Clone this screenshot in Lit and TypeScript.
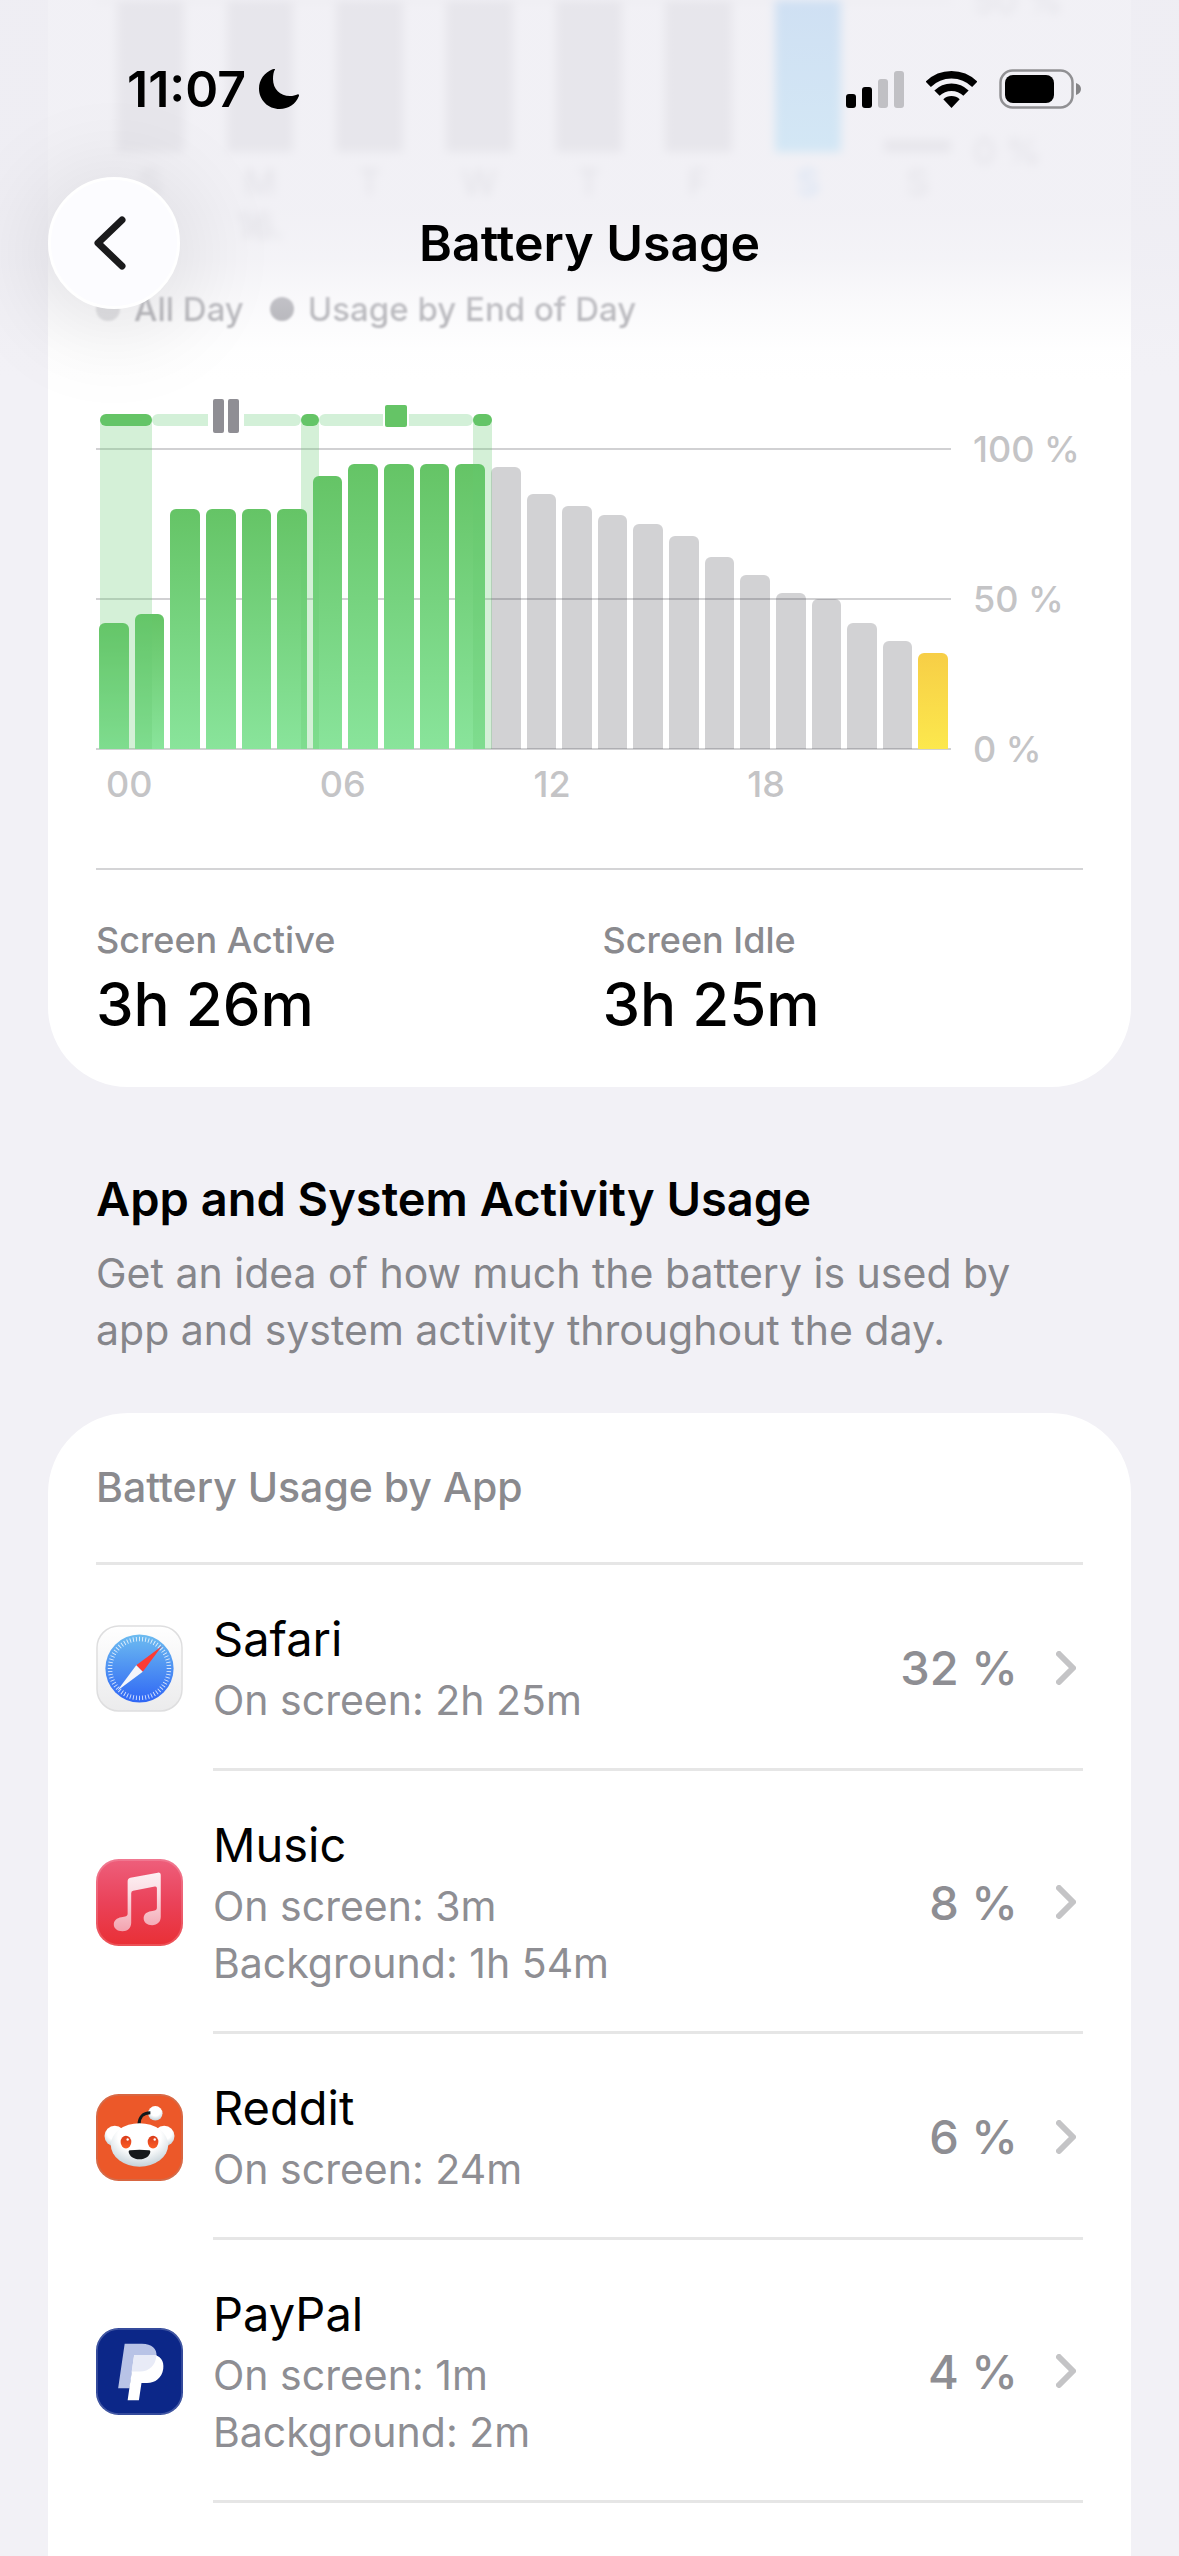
import { LitElement, css, html, svg } from 'lit'
import { customElement, property } from 'lit/decorators.js'
import { classMap } from 'lit/directives/class-map.js'

interface Usage {
   id: string
   name: string
   details: string[]
   percent: number
}

interface Segment {
   kind: 'idle' | 'charging' | 'paused' | 'done'
   start: number
   end: number
}

// battery level per hour, in percent
const levels = [
   42, 45, 80, 80, 80, 80, 91, 95, 95, 95, 95, 94,
   85, 81, 78, 75, 71, 64, 58, 52, 50, 42, 36, 32,
]

// hours during which the phone was plugged in
const segments: Segment[] = [
   { kind: 'idle', start: 0, end: 0.11 },
   { kind: 'charging', start: 0.11, end: 1.56 },
   { kind: 'paused', start: 1.56, end: 5.75 },
   { kind: 'charging', start: 5.75, end: 6.26 },
   { kind: 'done', start: 6.26, end: 10.59 },
   { kind: 'charging', start: 10.59, end: 11.11 },
]

const week = [
   { day: 'S', level: 100 },
   { day: 'M', level: 100, date: '16.' },
   { day: 'T', level: 100 },
   { day: 'W', level: 100 },
   { day: 'T', level: 100 },
   { day: 'F', level: 100 },
   { day: 'S', level: 100, selected: true },
   { day: 'S', level: 4 },
]

const apps: Usage[] = [
   { id: 'safari', name: 'Safari', details: ['On screen: 2h 25m'], percent: 32 },
   { id: 'music', name: 'Music', details: ['On screen: 3m', 'Background: 1h 54m'], percent: 8 },
   { id: 'reddit', name: 'Reddit', details: ['On screen: 24m'], percent: 6 },
   { id: 'paypal', name: 'PayPal', details: ['On screen: 1m', 'Background: 2m'], percent: 4 },
]

const logos = {
   safari: svg`
      <defs>
         <linearGradient id="case" x1="0" y1="0" x2="0" y2="1">
            <stop offset="0" stop-color="#fff" /><stop offset="1" stop-color="#ebebec" />
         </linearGradient>
         <linearGradient id="dial" x1="0" y1="0" x2="0" y2="1">
            <stop offset="0" stop-color="#6dbcf0" /><stop offset="1" stop-color="#2f66f5" />
         </linearGradient>
      </defs>
      <rect x="1" y="1" width="86" height="86" rx="22" fill="url(#case)" stroke="#dededf" stroke-width="1.5" />
      <circle cx="44" cy="44" r="34.5" fill="url(#dial)" />
      <circle cx="44" cy="44" r="29.8" fill="none" stroke="#fff" stroke-opacity=".8" stroke-width="4.6"
         pathLength="60" stroke-dasharray=".3 .7" stroke-dashoffset=".15" />
      <path d="M66.5 21.5 47.3 47.3 40.7 40.7Z" fill="#fb3b35" />
      <path d="M21.5 66.5 40.7 40.7 47.3 47.3Z" fill="#f4f6fb" />
   `,
   music: svg`
      <defs>
         <linearGradient id="red" x1="0" y1="0" x2="0" y2="1">
            <stop offset="0" stop-color="#ee5f7c" /><stop offset=".5" stop-color="#ea4259" />
            <stop offset="1" stop-color="#e92f35" />
         </linearGradient>
         <linearGradient id="note" x1="0" y1="0" x2="0" y2="1">
            <stop offset="0" stop-color="#fdf0f3" /><stop offset=".35" stop-color="#fadde3" />
            <stop offset="1" stop-color="#f3a3af" />
         </linearGradient>
      </defs>
      <rect width="88" height="88" rx="23" fill="url(#red)" />
      <rect x="1" y="1" width="86" height="86" rx="22" fill="none" stroke="#fff" stroke-opacity=".16" stroke-width="2" />
      <path fill="url(#note)" d="M32 22.5Q32 19.6 34.8 19L62.5 13.8Q65.5 13.4 65.5 16.4V58.5C65.5 63.6 62 67 56.8 67
         C51.6 67 48.2 64 48.2 60C48.2 56 51 53.6 55.6 52.8C59.6 52.2 61.6 51.8 61.6 49V29.5Q61.6 27.4 59.5 27.8
         L37.6 32.2Q35.6 32.6 35.6 34.6V64.4C35.6 69.6 32 73 26.8 73C21.4 73 18 70.2 18 66.2C18 62 21 59.6 25.6 58.8
         C29.8 58.2 32 57.8 32 55Z" />
   `,
   reddit: svg`
      <defs>
         <radialGradient id="face" cx=".5" cy=".3" r=".75">
            <stop offset=".5" stop-color="#fff" /><stop offset="1" stop-color="#bccbd3" />
         </radialGradient>
         <linearGradient id="eye" x1="0" y1="0" x2="0" y2="1">
            <stop offset="0" stop-color="#d93c1b" /><stop offset="1" stop-color="#fb5d25" />
         </linearGradient>
      </defs>
      <rect width="88" height="88" rx="23" fill="#ec5829" />
      <rect x="1" y="1" width="86" height="86" rx="22" fill="none" stroke="#999" stroke-opacity=".3" stroke-width="1.5" />
      <circle cx="60" cy="19.5" r="7.3" fill="url(#face)" />
      <path d="M43.5 31C43.5 23.5 47.5 19 55 19" fill="none" stroke="#11191c" stroke-width="3" />
      <circle cx="19" cy="42.5" r="10.4" fill="url(#face)" />
      <circle cx="69" cy="42.5" r="10.4" fill="url(#face)" />
      <ellipse cx="44" cy="51.5" rx="29" ry="22" fill="url(#face)" />
      <ellipse cx="30.3" cy="48.6" rx="5.4" ry="6.4" fill="url(#eye)" />
      <ellipse cx="57.7" cy="48.6" rx="5.4" ry="6.4" fill="url(#eye)" />
      <circle cx="32" cy="46" r="1.2" fill="#fff" /><circle cx="59.4" cy="46" r="1.2" fill="#fff" />
      <path d="M33 58.4Q33 57 34.6 57Q44 56 53.4 57Q55 57 55 58.4C54.2 63 50 66 44 66C38 66 33.8 63 33 58.4Z" fill="#15191b" />
   `,
   paypal: svg`
      <rect width="88" height="88" rx="23" fill="#0c2788" />
      <rect x="1" y="1" width="86" height="86" rx="22" fill="none" stroke="#fff" stroke-opacity=".22" stroke-width="1.5" />
      <path d="M29 16H46.5C56.5 16 61.8 21 61.2 28.5C60 38.5 53.5 44 44.5 44H36.5L34 61H22.4Z" fill="#b8c3e6" />
      <path d="M38.6 27.4H57C65 27.4 69.2 33.4 68 41.4C66.6 50.4 60 55.6 51.6 55.6H46L43.4 73H32Z" fill="#fff" />
      <path d="M38.6 27.4H61.2C60.4 38.4 53.5 44 44.5 44H36.1Z" fill="#e8ebf7" />
   `,
}

const chargeIcons = {
   paused: svg`
      <rect x="5" y="0" width="11" height="34" rx="2" fill="#8f8e94" />
      <rect x="20" y="0" width="11" height="34" rx="2" fill="#8f8e94" />
   `,
   done: svg`<rect x="2" y="6" width="22" height="22" rx="2" fill="#65c466" />`,
}

/**
 * Clock and connection symbols at the top of the screen
 */
@customElement('status-bar')
export class StatusBar extends LitElement {

   render() {
      return html`
         <div class="left">
            <span class="time">11:07</span>
            <svg width="40" height="40" viewBox="0 0 40 40">
               <path d="M15.8.8C14.6 3 14 6.200 14 10C14 20 21 27 31 27C34 27 36.500 26.300 38.400 25.500
                  C39.900 25 40.300 26 39.800 27.300C36.800 35 29.500 40 20.700 40C9 40 0 31 0 19.500
                  C0 11 5.500 3.500 13.500.3C15.200-.3 16.600-.4 15.800.8Z" />
            </svg>
         </div>
         <div class="right">
            <svg width="58" height="38" viewBox="0 0 58 38">
               <rect x="0" y="24" width="10" height="14" rx="3" />
               <rect x="16" y="17" width="10" height="21" rx="3" />
               <rect x="32" y="9" width="10" height="29" rx="3" opacity=".2" />
               <rect x="48" y="1" width="10" height="37" rx="3" opacity=".2" />
            </svg>
            <svg width="51" height="38" viewBox="0 0 51 38">
               <path d="M2.200 14.300A33 33 0 0 1 48.800 14.300M11 23.200A20.500 20.500 0 0 1 40 23.200"
                  fill="none" stroke="#000" stroke-width="7.500" />
               <path d="M25.500 38 17.300 29.300A12 12 0 0 1 33.700 29.300Z" />
            </svg>
            <svg width="82" height="40" viewBox="0 0 82 40">
               <rect x="1.500" y="1.500" width="72" height="37" rx="12" fill="none" stroke="#000" stroke-opacity=".4" stroke-width="2.500" />
               <rect x="6" y="6" width="49" height="28" rx="8" />
               <path d="M77 14C80 15 82 17 82 20C82 23 80 25 77 26Z" opacity=".45" />
            </svg>
         </div>
      `
   }

   static styles = css`
      :host {
         display: flex;
         justify-content: space-between;
         align-items: center;
         padding: 0 98px 0 127px;
      }

      .left,
      .right {
         display: flex;
         align-items: center;
      }

      .left {
         gap: 13px;
      }

      .right {
         gap: 22px;
      }

      .time {
         font-size: 50px;
         font-weight: 600;
      }
   `
}

/**
 * Tail of the chart with the last days, scrolled under the header
 */
@customElement('week-chart')
export class WeekChart extends LitElement {

   render() {
      return html`
         <div class="chart">
            <div class="plot">
               ${week.map(d => html`
                  <div class=${classMap({ bar: true, selected: !!d.selected })} style="height: ${Math.min(d.level * 2, 100)}%"></div>
               `)}
            </div>
            <div class="axis"><span>50 %</span><span>0 %</span></div>
         </div>
         <div class="days">
            ${week.map(d => html`
               <div class=${classMap({ day: true, current: !!d.selected })}>${d.day}<br>${d.date ?? ''}</div>
            `)}
         </div>
      `
   }

   static styles = css`
      :host {
         display: block;
         font-size: 36px;
         line-height: 43px;
         color: #b4b4b9;
         filter: blur(5px);
      }

      .chart {
         display: flex;
      }

      .plot,
      .days {
         display: flex;
         gap: 43px;
         padding-left: 21px;
      }

      .plot {
         flex: 1;
         height: 152px;
         align-items: flex-end;
         background: linear-gradient(#d1d1d3 2px, transparent 2px);
      }

      .bar {
         flex: 1;
         background: #cbcace;
      }

      .selected {
         background: linear-gradient(#53acf3, #67cffd);
      }

      .axis {
         width: 132px;
         padding-left: 22px;
         box-sizing: border-box;
         display: flex;
         flex-direction: column;
         justify-content: space-between;
         margin: -21px 0;
      }

      .days {
         margin: 9px 132px 0 0;
      }

      .day {
         flex: 1;
         height: 86px;
         text-align: center;
      }

      .current {
         color: #6ab0f5;
      }
   `
}

/**
 * Battery level per hour with the charging timeline above it
 */
@customElement('level-chart')
export class LevelChart extends LitElement {

   width(s: Segment) {
      return `${(s.end - s.start) / 24 * 100}%`
   }

   segment(s: Segment) {
      if (s.kind === 'idle') {
         return html`<div style="width: ${this.width(s)}"></div>`
      }
      if (s.kind === 'charging') {
         return html`<div class="pill" style="width: ${this.width(s)}"></div>`
      }
      const iconWidth = s.kind === 'paused' ? 36 : 26
      return html`
         <div class="hold" style="width: ${this.width(s)}">
            <div class="line before"></div>
            <svg width=${iconWidth} height="34">${chargeIcons[s.kind]}</svg>
            <div class="line after"></div>
         </div>
      `
   }

   barClass(hour: number) {
      return classMap({
         bar: true,
         charged: hour < 11,
         low: hour === 23,
      })
   }

   render() {
      return html`
         <div class="timeline">${segments.map(s => this.segment(s))}</div>
         <div class="chart">
            <div class="plot">
               <div class="grid"><i></i><i></i><i></i></div>
               <div class="bars">
                  ${levels.map((level, hour) => html`<div class=${this.barClass(hour)} style="height: ${level}%"></div>`)}
               </div>
               ${segments.filter(s => s.kind === 'charging').map(s => html`
                  <div class="band" style="left: ${s.start / 24 * 100}%; width: ${this.width(s)}"></div>
               `)}
            </div>
            <div class="axis"><span>100 %</span><span>50 %</span><span>0 %</span></div>
         </div>
         <div class="hours"><span>00</span><span>06</span><span>12</span><span>18</span></div>
      `
   }

   static styles = css`
      :host {
         display: block;
         font-size: 36px;
         font-weight: 500;
         line-height: 44px;
         color: #c4c4c6;
      }

      .timeline {
         display: flex;
         height: 34px;
         margin: 0 132px 15px 0;
      }

      .pill,
      .line {
         height: 12px;
         margin-top: 15px;
      }

      .pill {
         background: #65c466;
         border-radius: 6px;
      }

      .hold {
         display: flex;
      }

      .line {
         flex: 1;
         background: #d3f0d8;
      }

      .before {
         border-radius: 6px 0 0 6px;
      }

      .after {
         border-radius: 0 6px 6px 0;
      }

      .chart {
         display: flex;
      }

      .plot {
         position: relative;
         flex: 1;
         height: 302px;
      }

      .grid {
         position: absolute;
         inset: 0;
         display: flex;
         flex-direction: column;
         justify-content: space-between;
      }

      .grid i {
         height: 2px;
         background: #d1d1d3;
      }

      .bars {
         position: relative;
         display: flex;
         align-items: flex-end;
         gap: 6px;
         height: 100%;
         padding: 1px 3px;
         box-sizing: border-box;
      }

      .bar {
         flex: 1;
         border-radius: 6px 6px 0 0;
         background: rgba(60, 60, 67, 0.23);
      }

      .charged {
         background: linear-gradient(#65c466, #89e49b);
      }

      .low {
         background: linear-gradient(#f7ce46, #fce84d);
      }

      /* runs from the timeline pill down to the zero line */
      .band {
         position: absolute;
         top: -28px;
         bottom: 1px;
         background: rgba(99, 201, 113, 0.28);
      }

      .axis {
         display: flex;
         flex-direction: column;
         justify-content: space-between;
         width: 132px;
         margin: -21px 0;
         padding-left: 22px;
         box-sizing: border-box;
      }

      .hours {
         display: grid;
         grid-template-columns: repeat(4, 1fr);
         margin: 12px 132px 0 0;
      }

      .hours span {
         padding-left: 10px;
      }
   `
}

/**
 * One app in the usage list
 */
@customElement('usage-row')
export class UsageRow extends LitElement {

   @property({ attribute: false }) app!: Usage

   render() {
      const { id, name, details, percent } = this.app
      return html`
         <a href="#${id}">
            <svg class="logo" viewBox="0 0 88 88">${logos[id as keyof typeof logos]}</svg>
            <div class="body">
               <div class="text">
                  <div class="name">${name}</div>
                  ${details.map(d => html`<div class="detail">${d}</div>`)}
               </div>
               <span class="percent">${percent} %</span>
               <svg class="chevron" width="20" height="34" viewBox="0 0 20 34">
                  <path d="M3 3 17 17 3 31" />
               </svg>
            </div>
         </a>
      `
   }

   static styles = css`
      :host {
         display: block;
      }

      a {
         display: flex;
         align-items: center;
         gap: 30px;
         color: inherit;
         text-decoration: none;
      }

      .logo {
         width: 87px;
         height: 87px;
      }

      .body {
         flex: 1;
         display: flex;
         align-items: center;
         padding: 41px 7px 42px 0;
         box-shadow: inset 0 -3px #e6e6e6;
      }

      .text {
         flex: 1;
      }

      .name {
         font-size: 47px;
         line-height: 66px;
      }

      .detail {
         font-size: 41px;
         line-height: 57px;
         color: #8e8e93;
      }

      .percent {
         font-size: 47px;
         font-weight: 500;
         color: #8e8e93;
      }

      .chevron {
         margin-left: 38px;
         fill: none;
         stroke: #c4c4c6;
         stroke-width: 6;
         stroke-linecap: round;
         stroke-linejoin: round;
      }
   `
}

@customElement('app-root')
export class AppRoot extends LitElement {

   render() {
      return html`
         <header>
            <status-bar></status-bar>
            <nav>
               <button aria-label="Back">
                  <svg width="32" height="54" viewBox="0 0 32 54">
                     <path d="M28 4 4 27 28 50" />
                  </svg>
               </button>
               <h1>Battery Usage</h1>
            </nav>
         </header>
         <main>
            <section class="card levels">
               <week-chart></week-chart>
               <div class="legend">
                  <span class="key light">All Day</span>
                  <span class="key">Usage by End of Day</span>
               </div>
               <level-chart></level-chart>
               <dl>
                  <div>
                     <dt>Screen Active</dt>
                     <dd>3h 26m</dd>
                  </div>
                  <div>
                     <dt>Screen Idle</dt>
                     <dd>3h 25m</dd>
                  </div>
               </dl>
            </section>
            <section class="intro">
               <h2>App and System Activity Usage</h2>
               <p>Get an idea of how much the battery is used by app and system activity throughout the day.</p>
            </section>
            <section class="card apps">
               <h3>Battery Usage by App</h3>
               ${apps.map(app => html`<usage-row .app=${app}></usage-row>`)}
            </section>
         </main>
      `
   }

   static styles = css`
      :host {
         display: block;
         position: relative;
         min-height: 100vh;
         overflow: hidden;
         background: #f2f1f6;
         color: #000;
         font-family: Inter, sans-serif;
      }

      h1,
      h2,
      h3,
      p,
      dl,
      dd {
         margin: 0;
      }

      header {
         position: absolute;
         top: 0;
         left: 0;
         right: 0;
         z-index: 1;
         height: 380px;
         background: linear-gradient(
            rgba(238, 237, 243, 0.8) 210px,
            rgba(238, 237, 243, 0.65) 260px,
            rgba(238, 237, 243, 0.35) 300px,
            rgba(238, 237, 243, 0.05) 350px,
            rgba(238, 237, 243, 0) 380px
         );
      }

      status-bar {
         height: 177px;
      }

      nav {
         display: grid;
         grid-template-columns: 132px 1fr 132px;
         align-items: center;
         padding: 0 48px;
      }

      button {
         display: grid;
         place-items: center;
         width: 132px;
         height: 132px;
         padding: 0 8px 0 0;
         border: 3px solid #fff;
         border-radius: 50%;
         background: #fcfcff;
         box-shadow: 0 10px 90px 20px rgba(0, 0, 0, 0.08);
      }

      button path {
         fill: none;
         stroke: #1a1a1c;
         stroke-width: 7;
         stroke-linecap: round;
         stroke-linejoin: round;
      }

      h1 {
         text-align: center;
         font-size: 50px;
         font-weight: 600;
      }

      main {
         display: flex;
         flex-direction: column;
         min-height: 100vh;
         padding: 0 48px;
      }

      .card {
         padding: 0 48px;
         background: #fff;
      }

      .levels {
         border-radius: 0 0 80px 80px;
      }

      .legend {
         display: flex;
         gap: 26px;
         margin: 40px 0 68px;
         font-size: 33px;
         font-weight: 500;
         line-height: 44px;
         color: #a9a9ad;
         filter: blur(1px);
      }

      .key {
         display: flex;
         align-items: center;
         gap: 14px;
      }

      .key::before {
         content: '';
         width: 24px;
         height: 24px;
         border-radius: 50%;
         background: #a9a9ae;
      }

      .light::before {
         background: #dcdcde;
      }

      dl {
         display: grid;
         grid-template-columns: 1fr 1fr;
         gap: 26px;
         margin-top: 62px;
         padding: 48px 0 41px;
         border-top: 2px solid #d4d4d6;
      }

      dt {
         font-size: 36px;
         font-weight: 500;
         line-height: 44px;
         color: #8a8a8e;
      }

      dd {
         font-size: 60px;
         font-weight: 500;
         line-height: 84px;
      }

      .intro {
         padding: 82px 48px 54px;
      }

      h2 {
         font-size: 47px;
         font-weight: 600;
         line-height: 60px;
      }

      p {
         margin-top: 16px;
         font-size: 41px;
         line-height: 57px;
         color: #86868b;
      }

      .apps {
         flex: 1;
         border-radius: 80px 80px 0 0;
      }

      h3 {
         padding: 46px 0;
         border-bottom: 3px solid #e6e6e6;
         font-size: 41px;
         font-weight: 500;
         line-height: 57px;
         color: #8a8a8e;
      }
   `
}
